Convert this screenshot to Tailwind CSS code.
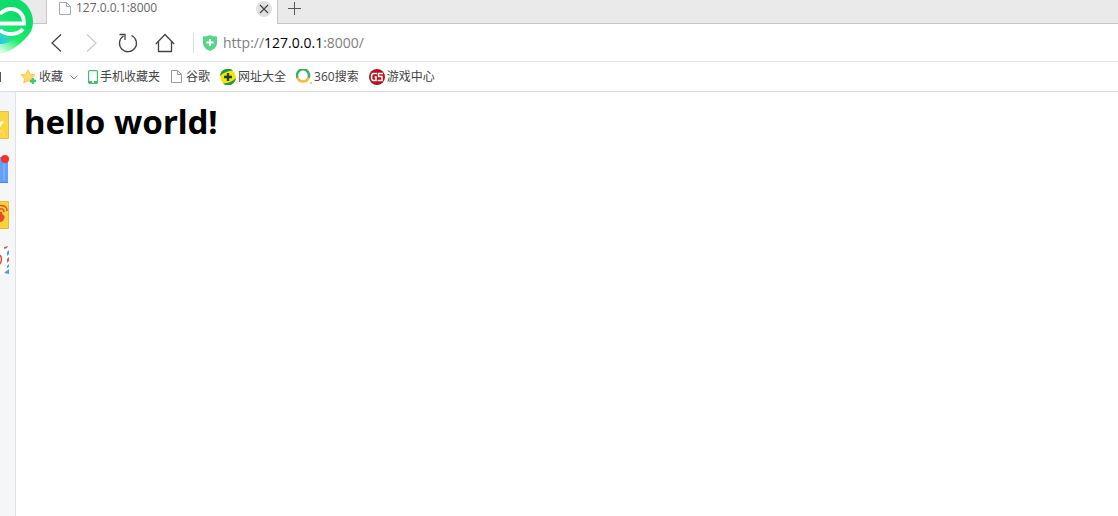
<!DOCTYPE html>
<html lang="zh-CN">
<head>
  <meta charset="UTF-8" />
  <meta name="viewport" content="width=device-width, initial-scale=1.0"/>
  <title>127.0.0.1:8000</title>
  <script src="https://cdn.jsdelivr.net/npm/@tailwindcss/browser@4"></script>
</head>
<body class="min-h-screen flex flex-col overflow-hidden bg-white text-[#444] font-['Open_Sans','Noto_Sans_CJK_SC',sans-serif]">

  <!-- browser logo -->
  <svg class="absolute left-0 top-0 z-10 w-9 h-14" viewBox="0 0 36 56" fill="none" aria-hidden="true">
    <defs>
      <linearGradient id="pin" x1="2" y1="54" x2="24" y2="22" gradientUnits="userSpaceOnUse">
        <stop offset="0" stop-color="#e8fff2"/>
        <stop offset=".5" stop-color="#1fee6c"/>
        <stop offset="1" stop-color="#10dc6c"/>
      </linearGradient>
      <linearGradient id="shade" x1="14" y1="30" x2="0" y2="42" gradientUnits="userSpaceOnUse">
        <stop offset="0" stop-color="#18d59a" stop-opacity="0"/>
        <stop offset="1" stop-color="#1cc4f0"/>
      </linearGradient>
    </defs>
    <path d="M0 0H20C28 4 33 13 33 22C33 30 29 35 24 40C17 47 9 52 0 54Z" fill="url(#pin)"/>
    <path d="M0 0H14L18 36Q10 44 0 44Z" fill="url(#shade)"/>
    <path d="M0 23.500H24C24 14 18 9 11 9C6 9 3 11 0 14M0 30C5 35 17 36 23 29" stroke="#fff" stroke-width="3.800"/>
  </svg>

  <header>
    <!-- tabs -->
    <div class="flex h-6 bg-[#eaeaea]">
      <div class="w-[47px] shrink-0 border-r border-b border-[#c6c6c6]"></div>
      <div class="w-[230px] shrink-0 flex items-start bg-white pl-3 pr-[5px]">
        <svg class="w-3 h-3.5 mt-px shrink-0" viewBox="0 0 12 14" fill="#fff" stroke="#a4a9b2" aria-hidden="true">
          <path d="M.5 1.5H7.5L11.5 5.5V13.5H.5ZM7.5 1.5V5.5H11.5"/>
        </svg>
        <span class="ml-[5px] text-[12px] leading-4 text-[#666]">127.0.0.1:8000</span>
        <button type="button" aria-label="关闭标签页" class="ml-auto mt-px w-4 h-4 rounded-full bg-[#e0e0e0]">
          <svg class="w-4 h-4" viewBox="0 0 16 16" stroke="#444" stroke-width="1.2" aria-hidden="true"><path d="M4 4L12 12M12 4L4 12"/></svg>
        </button>
      </div>
      <div class="flex-1 border-l border-b border-[#c6c6c6] pl-2.5">
        <button type="button" aria-label="新建标签页" class="block w-3.5 h-4 mt-px">
          <svg class="w-3.5 h-4" viewBox="0 0 14 16" stroke="#555" aria-hidden="true"><path d="M0 7.5H13M6.5 1V14"/></svg>
        </button>
      </div>
    </div>

    <!-- address bar -->
    <div class="flex items-center h-[38px] border-b border-[#e6e6e6] pl-[47px]">
      <button type="button" aria-label="后退" class="w-5 h-5">
        <svg class="w-5 h-5" viewBox="0 0 20 20" fill="none" stroke="#444" stroke-width="1.3" aria-hidden="true"><path d="M14 1.500L5 10L14 18.500"/></svg>
      </button>
      <button type="button" aria-label="前进" class="ml-[15px] w-5 h-5">
        <svg class="w-5 h-5" viewBox="0 0 20 20" fill="none" stroke="#ccc" stroke-width="1.3" aria-hidden="true"><path d="M5 1.500L14 10L5 18.500"/></svg>
      </button>
      <button type="button" aria-label="刷新" class="ml-4 w-5 h-5">
        <svg class="w-5 h-5" viewBox="0 0 20 20" fill="none" stroke="#444" stroke-width="1.3" aria-hidden="true">
          <path d="M13.500 2.500A8.500 8.500 0 1 1 5.500 3M1.500 1.500H7V7"/>
        </svg>
      </button>
      <button type="button" aria-label="主页" class="ml-[17px] w-5 h-5">
        <svg class="w-5 h-5" viewBox="0 0 20 20" fill="none" stroke="#444" stroke-width="1.3" aria-hidden="true">
          <path d="M.8 11L10 1.500L19.200 11M3.500 8.500V18.500H16.500V8.500"/>
        </svg>
      </button>
      <div class="ml-[18px] w-px h-5 bg-[#d8e2d8]"></div>
      <svg class="ml-[9px] w-3.5 h-4 shrink-0" viewBox="0 0 14 16" aria-hidden="true">
        <path d="M0 1.500Q4 1.500 7 0Q10 1.500 14 1.500V9Q13 14 7 16Q1 14 0 9Z" fill="#55d68a"/>
        <path d="M7 4V11M3.500 7.500H10.500" stroke="#fff" stroke-width="2"/>
      </svg>
      <div class="relative flex-1 ml-1.5 text-[14px] leading-5">
        <input type="text" aria-label="地址" value="http://127.0.0.1:8000/" class="block w-full h-5 text-transparent caret-black outline-none" />
        <div class="absolute inset-0 pointer-events-none text-[#808080]" aria-hidden="true">http://<span class="text-black">127.0.0.1</span>:8000/</div>
      </div>
    </div>

    <!-- bookmarks -->
    <nav class="flex items-center h-[30px] border-b border-[#dcdcdc] text-[12px] leading-4 whitespace-nowrap">
      <div class="w-px h-2.5 bg-[#555]"></div>
      <a href="#" class="ml-5 flex items-center">
        <svg class="w-4 h-4 mr-0.5" viewBox="0 0 16 16" aria-hidden="true">
          <path d="M7 .8L9.200 5.200L14 6L10.500 9.300L11.300 14L7 11.800L2.700 14L3.500 9.300L0 6L4.800 5.200Z" fill="#ffd966" stroke="#f0c44e" stroke-width=".8"/>
          <path d="M12 9V15M9 12H15" stroke="#4cc476" stroke-width="2.400"/>
        </svg>
        收藏
        <svg class="w-2 h-2 ml-[7px]" viewBox="0 0 8 8" fill="none" stroke="#888" aria-hidden="true"><path d="M.5 2.500L4 6L7.500 2.500"/></svg>
      </a>
      <a href="#" class="ml-2.5 flex items-center">
        <svg class="w-2.5 h-3.5 mr-0.5" viewBox="0 0 10 14" fill="none" aria-hidden="true">
          <rect x=".6" y=".6" width="8.800" height="12.800" rx="1" stroke="#45bd73" stroke-width="1.200"/>
          <path d="M1 12H4M6 12H9" stroke="#45bd73" stroke-width="2"/>
        </svg>
        手机收藏夹
      </a>
      <a href="#" class="ml-[11px] flex items-center">
        <svg class="w-[11px] h-[13px] mr-1" viewBox="0 0 11 13" fill="none" stroke="#999" aria-hidden="true"><path d="M.5 .5H6.500L10.500 4.500V12.500H.5ZM6.500 .5V4.500H10.500"/></svg>
        谷歌
      </a>
      <a href="#" class="ml-2.5 flex items-center">
        <svg class="w-4 h-4 mr-0.5" viewBox="0 0 16 16" aria-hidden="true">
          <circle cx="8" cy="8" r="7.800" fill="#f5e412"/>
          <path d="M0 7A8 8 0 0 1 13 1.500C8 2 3 3.500 0 7ZM16 9A8 8 0 0 1 3 14.500C8 14 13 12.500 16 9Z" fill="#249a30"/>
          <path d="M8 4V12M4 8H12" stroke="#174a18" stroke-width="2.400"/>
        </svg>
        网址大全
      </a>
      <a href="#" class="ml-2.5 flex items-center">
        <svg class="w-4 h-4 mr-0.5" viewBox="0 0 16 16" fill="none" aria-hidden="true">
          <path d="M1.500 9A6 6.200 0 1 1 12.500 9" stroke="#36b368" stroke-width="2.600"/>
          <path d="M1.500 8.500A5.800 5.800 0 0 0 12.500 8.500" stroke="#f2bd3e" stroke-width="2.600"/>
          <circle cx="15" cy="14" r="1" fill="#f2bd3e"/>
        </svg>
        360搜索
      </a>
      <a href="#" class="ml-2.5 flex items-center">
        <svg class="w-4 h-4 mr-0.5" viewBox="0 0 16 16" fill="none" aria-hidden="true">
          <circle cx="8" cy="8" r="8" fill="#b5121b"/>
          <path d="M8 4.500H4.500Q2.500 4.500 2.500 8T4.500 11.500H7V8H5.500M14 4.500H9.500V7.500H13V11.500H8.500" stroke="#fff" stroke-width="1.500"/>
        </svg>
        游戏中心
      </a>
    </nav>
  </header>

  <div class="flex flex-1">
    <!-- side tools -->
    <aside class="w-4 shrink-0 flex flex-col items-start gap-[17px] pt-[19px] bg-[#f5f6f7] border-r border-[#e2e2e2]">
      <button type="button" aria-label="收藏夹" class="w-[9px] h-7">
        <svg class="w-[9px] h-7" viewBox="0 0 9 28" aria-hidden="true">
          <path d="M0 .5H8.500V27.500H0" fill="#fcd640" stroke="#e6bd48"/>
          <path d="M0 11L4 10L1 15L0 16Z" fill="#fff"/>
          <path d="M0 20Q4 20 4 25" stroke="#ffe68a" fill="none"/>
        </svg>
      </button>
      <button type="button" aria-label="阅读" class="w-[9px] h-7">
        <svg class="w-[9px] h-7 overflow-visible" viewBox="0 0 9 28" aria-hidden="true">
          <path d="M0 1H6Q8 1 8 3V27H0Z" fill="#669ff5"/>
          <path d="M4 3V24" stroke="#8dbcff"/>
          <path d="M0 26.500H8" stroke="#5686dc"/>
          <circle cx="5" cy="3" r="4" fill="#f5302e"/>
        </svg>
      </button>
      <button type="button" aria-label="微博" class="w-[9px] h-7">
        <svg class="w-[9px] h-7" viewBox="0 0 9 28" fill="none" aria-hidden="true">
          <path d="M0 .5H8.500V27.500H0" fill="#fcd23a" stroke="#e6b93a"/>
          <path d="M0 11Q3 10 2 13Q6 15 4 18Q3 21 0 21Z" fill="#ea4a2c"/>
          <path d="M0 4.500Q7 4 7 10M0 8Q4 7 4 11" stroke="#ea4a2c" stroke-width="1.500"/>
        </svg>
      </button>
      <button type="button" aria-label="邮箱" class="w-[9px] h-7">
        <svg class="w-[9px] h-7" viewBox="0 0 9 28" fill="none" aria-hidden="true">
          <path d="M0 0H9V28H0Z" fill="#fff"/>
          <path d="M0 9Q3 13 0 18" stroke="#e2503c" stroke-width="1.500"/>
          <path d="M4 1L8 0L7 2L4 3ZM7 13L9 11V15L7 17Z" fill="#dc5a45"/>
          <path d="M7 6L9 4V8L7 10ZM7 20L9 18V21L7 22ZM4 27L9 23V28Z" fill="#469fdc"/>
        </svg>
      </button>
    </aside>

    <main class="flex-1 px-2 pt-1.5">
      <h1 class="text-[33px] leading-12 font-bold text-black font-['Noto_Sans',sans-serif]">hello world!</h1>
    </main>
  </div>

</body>
</html>
